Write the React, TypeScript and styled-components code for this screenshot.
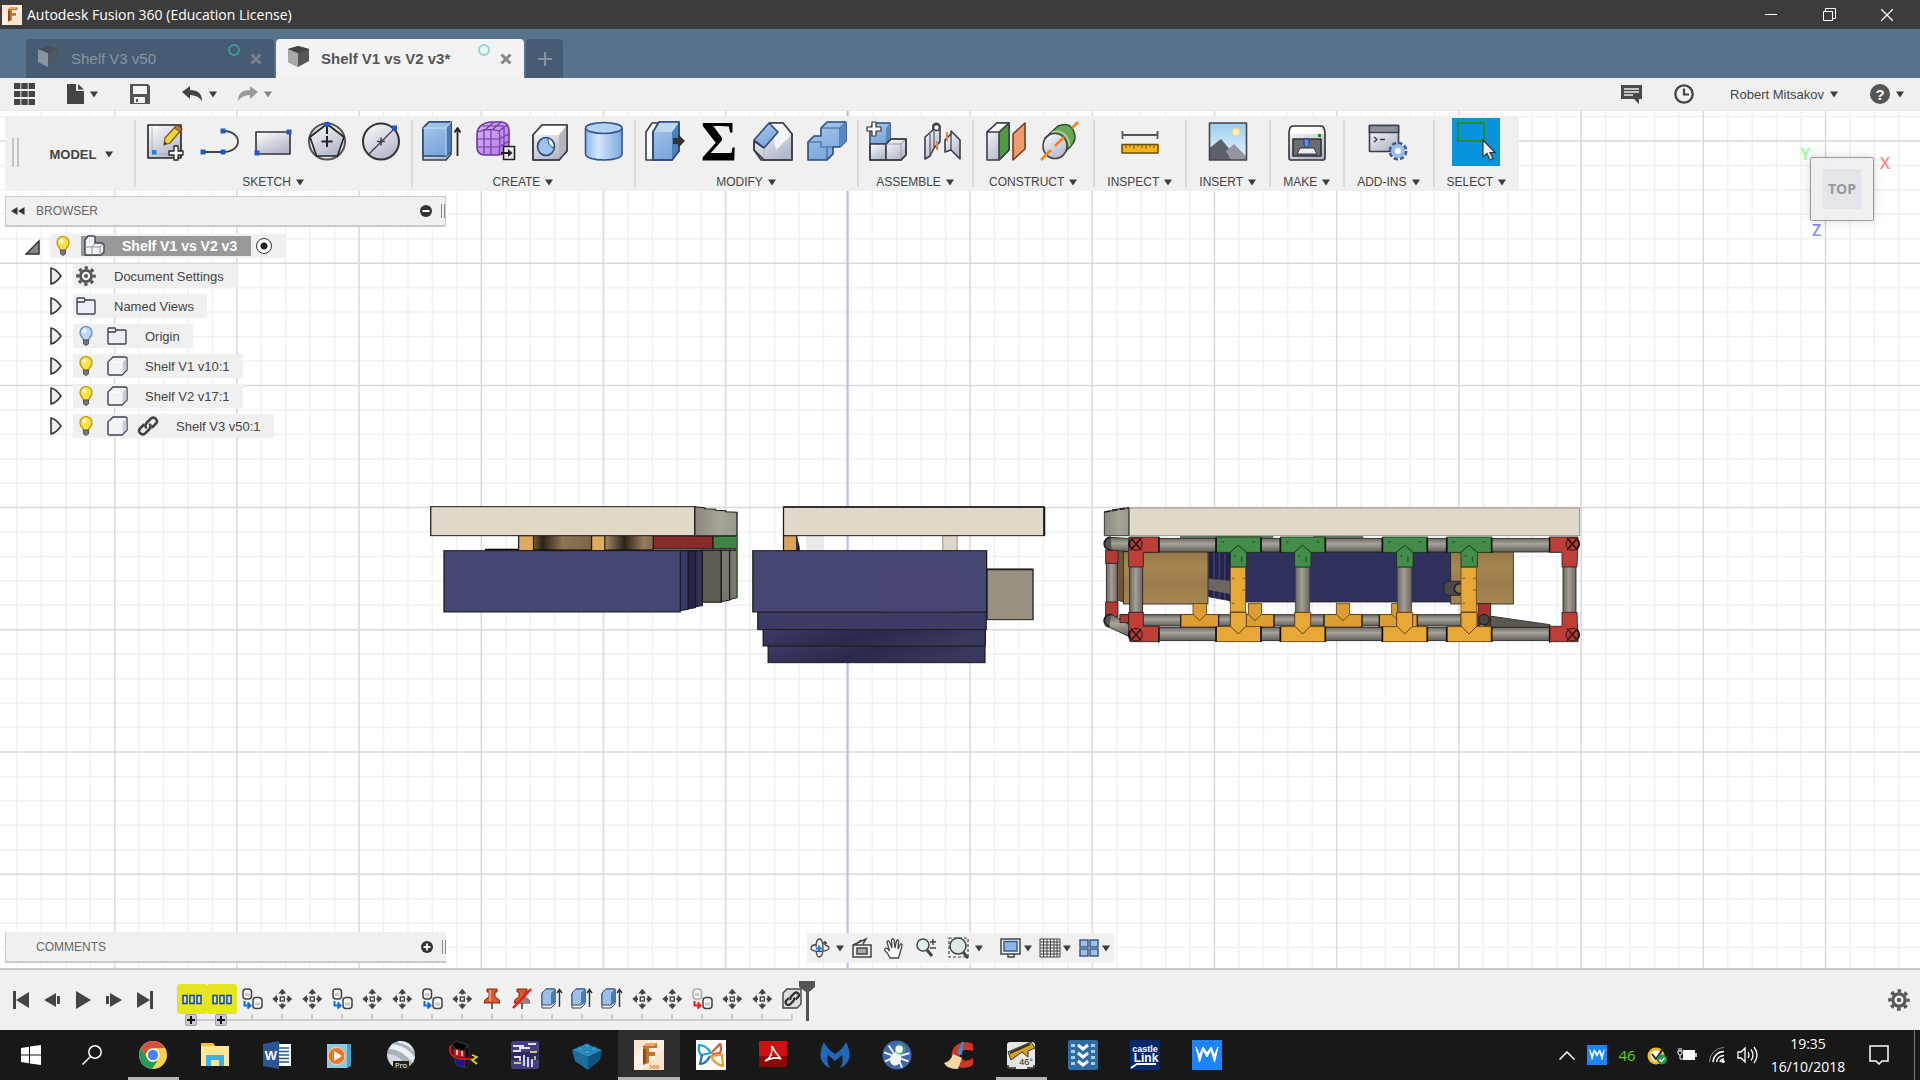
import React from "react";
import styled, { createGlobalStyle } from "styled-components";

const ui = `"Liberation Sans", Arial, sans-serif`;
const sys = `"Open Sans", "Segoe UI", sans-serif`;

const Global = createGlobalStyle`
  *, *::before, *::after { box-sizing: border-box; }
  body { margin: 0; background: #fff; font-family: ${ui}; color: #444; }
  button { border: 0; padding: 0; margin: 0; background: none; color: inherit; font: inherit; cursor: pointer; }
  ul, ol { list-style: none; margin: 0; padding: 0; }
  svg { display: block; }
`;

const Shell = styled.div`
  display: flex;
  flex-direction: column;
  min-height: 100vh;
`;

/* ---------- window title ---------- */
const TitleBar = styled.header`
  display: flex;
  align-items: center;
  height: 29px;
  background: #3c3c3c;
  color: #fff;
  font: 14px/28px ${sys};
  padding: 0 4px 0 2px;
`;
const TitleText = styled.h1`
  flex: 1;
  margin: 0 0 0 5px;
  font: inherit;
`;
const WindowButton = styled.button`
  display: grid;
  place-items: center;
  width: 58px;
  height: 28px;
`;

/* ---------- document tabs ---------- */
const TabBar = styled.nav`
  display: flex;
  align-items: flex-end;
  gap: 2px;
  height: 49px;
  padding-left: 26px;
  background: #56728d;
`;
const Tab = styled.div<{ $active?: boolean }>`
  display: flex;
  align-items: center;
  width: 248px;
  height: 39px;
  padding: 0 8px 0 12px;
  border-radius: 4px 4px 0 0;
  background: ${(p) => (p.$active ? "#f3f3f6" : "#455c72")};
  color: ${(p) => (p.$active ? "#555" : "#8b949d")};
  font-size: 15px;
  font-weight: ${(p) => (p.$active ? 700 : 400)};
`;
const TabName = styled.button`
  flex: 1;
  display: flex;
  align-items: center;
  gap: 12px;
  height: 39px;
  text-align: left;
  white-space: nowrap;
  svg { margin-bottom: 4px; }
`;
const SyncDot = styled.span<{ $dim?: boolean }>`
  align-self: flex-start;
  width: 12px;
  height: 12px;
  margin: 5px 6px 0 0;
  border: 2px solid ${(p) => (p.$dim ? "#3c9a94" : "#8fd9c5")};
  border-radius: 50%;
`;
const TabClose = styled.button`
  display: grid;
  place-items: center;
  width: 20px;
  height: 24px;
`;
const AddTab = styled.button`
  display: grid;
  place-items: center;
  width: 37px;
  height: 39px;
  border-radius: 4px 4px 0 0;
  background: #455c72;
`;

/* ---------- quick access bar ---------- */
const QuickBar = styled.div`
  display: flex;
  align-items: center;
  justify-content: space-between;
  height: 33px;
  padding: 0 16px 0 14px;
  background: #f0f0f0;
  border-bottom: 1px solid #e8e8e8;
  font-size: 13px;
`;
const QuickGroup = styled.div<{ $gap: number }>`
  display: flex;
  align-items: center;
  gap: ${(p) => p.$gap}px;
`;
const QuickButton = styled.button<{ $user?: boolean }>`
  display: flex;
  align-items: center;
  gap: 6px;
  height: 28px;
  padding-left: ${(p) => (p.$user ? 4 : 0)}px;
`;

/* ---------- canvas ---------- */
const Canvas = styled.main`
  position: relative;
  flex: 1;
  display: flex;
  flex-direction: column;
  align-items: flex-start;
  padding: 5px;
  overflow: hidden;
`;
const Scene = styled.svg`
  position: absolute;
  inset: 0;
  width: 100%;
  height: 100%;
`;
const Ribbon = styled.div`
  position: relative;
  display: flex;
  height: 75px;
  margin-bottom: 5px;
  background: #f0f0f0;
`;
const Grip = styled.div`
  width: 7px;
  height: 29px;
  margin: 22px 6px 0 7px;
  border: solid #c4c4c4;
  border-width: 0 2px;
`;
const Workspace = styled.button`
  width: 109px;
  padding: 2px 0 0 4px;
  display: flex;
  align-items: center;
  justify-content: center;
  gap: 9px;
  font-size: 13px;
  font-weight: 700;
`;
const Group = styled.section<{ $roomy?: boolean }>`
  display: flex;
  flex-direction: column;
  align-items: center;
  padding: 2px ${(p) => (p.$roomy ? 6 : 3)}px 0 ${(p) => (p.$roomy ? 7 : 4)}px;
  background: linear-gradient(#dadada, #dadada) 0 4px / 2px 67px no-repeat;
`;
const Tools = styled.div`
  display: flex;
`;
const Tool = styled.button<{ $on?: boolean }>`
  display: grid;
  place-items: center;
  width: ${(p) => (p.$on ? 48 : 54)}px;
  height: 48px;
  background: ${(p) => (p.$on ? "#0794dc" : "none")};
  svg { overflow: visible; }
`;
const GroupLabel = styled.button`
  display: flex;
  align-items: center;
  gap: 5px;
  padding: 0 10px;
  margin-top: 8px;
  height: 16px;
  font-size: 12px;
`;

const Panel = styled.div<{ $closed?: boolean }>`
  position: relative;
  display: flex;
  align-items: center;
  width: 441px;
  height: 31px;
  padding-left: 4px;
  background: #f0f0f0;
  border: solid #c9c9c9;
  border-width: ${(p) => (p.$closed ? "0 0 2px 1px" : "1px 1px 2px")};
  font-size: 12px;
  color: #666;
`;
const PanelTitle = styled.h2<{ $indent?: boolean }>`
  flex: 1;
  margin: 0 0 0 ${(p) => (p.$indent ? 26 : 11)}px;
  font: inherit;
`;
const PanelButton = styled.button`
  display: grid;
  place-items: center;
  width: 15px;
  height: 20px;
`;
const PanelGrip = styled.div`
  width: 4px;
  height: 14px;
  margin-left: 8px;
  border: solid #888;
  border-width: 0 1px;
`;

const Tree = styled.ul`
  position: relative;
  display: flex;
  flex-direction: column;
  gap: 6px;
  margin-top: 7px;
  font-size: 13px;
`;
const Row = styled.li<{ $root?: boolean }>`
  display: flex;
  align-items: center;
  height: 24px;
  padding-left: ${(p) => (p.$root ? 20 : 44)}px;
`;
const Twisty = styled.button<{ $root?: boolean }>`
  width: ${(p) => (p.$root ? 25 : 24)}px;
  height: 20px;
`;
const Chip = styled.div`
  display: flex;
  align-items: center;
  height: 24px;
  padding-right: 13px;
  background: #f0f0f0;
`;
const Cell = styled.span`
  display: grid;
  place-items: center;
  width: 31px;
  height: 22px;
  padding-right: 5px;
`;
const RowName = styled.button`
  padding: 0 0 0 10px;
  white-space: nowrap;
`;
const Selected = styled.div`
  display: flex;
  align-items: center;
  height: 20px;
  padding-right: 14px;
  margin-right: 5px;
  background: #999;
  color: #fff;
  font-size: 14px;
  font-weight: 700;
`;
const ActiveRadio = styled.input`
  appearance: none;
  width: 16px;
  height: 16px;
  margin: 0;
  border: 1px solid #333;
  border-radius: 50%;
  background: radial-gradient(#222 0 3px, #fff 4px);
`;

const Bottom = styled.div`
  position: relative;
  display: grid;
  grid-template-columns: 1fr auto 1fr;
  align-items: end;
  width: 100%;
  margin-top: auto;
`;
const NavBar = styled.div`
  display: flex;
  align-items: center;
  height: 30px;
  background: #f0f0f0;
`;
const NavButton = styled.button<{ $menu?: boolean; $far?: boolean; $wide?: boolean }>`
  display: flex;
  align-items: center;
  justify-content: ${(p) => (p.$wide ? "flex-start" : "center")};
  gap: ${(p) => (p.$far || p.$wide ? 5 : 2)}px;
  width: ${(p) => (p.$wide ? 55 : p.$menu ? 39 : 32)}px;
  height: 30px;
  padding-left: ${(p) => (p.$wide ? 6 : 0)}px;
`;

const ViewCube = styled.div`
  position: absolute;
  top: 34px;
  right: 30px;
  display: grid;
  grid-template-columns: 12px 64px 16px;
  grid-template-rows: 12px 64px 18px;
  font: 600 16px/18px ${sys};
`;
const CubeFace = styled.button`
  grid-area: 2 / 2;
  display: grid;
  place-items: center;
  border: 1px solid #999;
  border-radius: 2px;
  background: rgba(238, 238, 238, 0.9);
  box-shadow: 0 0 12px rgba(0, 0, 0, 0.15);
  span {
    width: 38px;
    padding: 10px 0;
    background: #e4e5ea;
    color: #96999d;
    font: 700 14px/20px ${sys};
  }
`;
const AxisName = styled.span<{ $axis: "X" | "Y" | "Z" }>`
  grid-area: ${(p) => ({ X: "1 / 3 / 3", Y: "1 / 1", Z: "3 / 2" })[p.$axis]};
  color: ${(p) => ({ X: "#ff8484", Y: "#8dff8d", Z: "#8a8aff" })[p.$axis]};
  justify-self: ${(p) => (p.$axis === "Z" ? "start" : "end")};
  padding: ${(p) => ({ X: "9px 0 0", Y: "0", Z: "0 2px" })[p.$axis]};
`;

/* ---------- timeline ---------- */
const Timeline = styled.footer`
  display: flex;
  align-items: flex-start;
  height: 62px;
  padding: 11px 10px 0 5px;
  background: #f0f0f0;
  border-top: 2px solid #c8c8c8;
`;
const Player = styled.div`
  display: flex;
  margin-right: 17px;
  padding-top: 2px;
`;
const PlayButton = styled.button`
  display: grid;
  place-items: center;
  width: 31px;
  height: 34px;
`;
const Steps = styled.ol`
  display: flex;
  height: 45px;
  padding-top: 3px;
  background: linear-gradient(#ccc, #ccc) 15px 38px / calc(100% - 30px) 2px no-repeat;
`;
const Step = styled.li`
  display: flex;
  flex-direction: column;
  align-items: center;
  width: 30px;
`;
const StepButton = styled.button<{ $hl?: boolean }>`
  width: 30px;
  height: 30px;
  border-radius: 3px;
  background: ${(p) => (p.$hl ? "#e4e71f" : "none")};
`;
const Tick = styled.span`
  width: 2px;
  height: 6px;
  background: #ccc;
`;
const Expand = styled.button`
  display: grid;
  place-items: center;
  width: 12px;
  height: 12px;
  margin-right: 3px;
  border: 1px solid #9aa0a8;
  border-radius: 2px;
  background: #c7ccd4;
`;
const Marker = styled.svg`
  margin-left: -8px;
`;
const Settings = styled.button`
  margin: 8px 0 0 auto;
`;

/* ---------- taskbar ---------- */
const Taskbar = styled.div`
  display: flex;
  align-items: stretch;
  height: 50px;
  background: #181818;
  color: #fff;
`;
const Task = styled.button<{ $system?: boolean; $run?: boolean; $focus?: boolean }>`
  display: grid;
  place-items: center;
  width: ${(p) => (p.$system ? 61 : 62)}px;
  background: ${(p) =>
    p.$focus
      ? "linear-gradient(#b5b3b3, #b5b3b3) bottom / 100% 3px no-repeat #2e2e2e"
      : p.$run
        ? "linear-gradient(#b5b3b3, #b5b3b3) bottom / 51px 3px no-repeat"
        : "none"};
`;
const Tray = styled.div`
  display: flex;
  align-items: center;
  margin-left: auto;
`;
const TrayButton = styled.button<{ $wide?: boolean }>`
  display: grid;
  place-items: center;
  width: ${(p) => (p.$wide ? 50 : 30)}px;
  height: 50px;
`;
const Temp = styled.span`
  color: #5fd000;
  font: 15px/20px ${sys};
`;
const Clock = styled.time`
  width: 92px;
  text-align: center;
  font: 14px/23px ${sys};
`;
const Peek = styled.button`
  align-self: stretch;
  width: 6px;
  margin-left: 10px;
  border-left: 1px solid #777;
`;

/* ---------- small drawings ---------- */
const Caret = ({ c = "#3c3c3c" }: { c?: string }) => (
  <svg width="8" height="7" viewBox="0 0 8 7"><path d="M0 0.500H8L4 6.500Z" fill={c} /></svg>
);

const HiddenSvg = styled.svg`
  position: absolute;
`;
const Defs = () => (
  <HiddenSvg width="0" height="0" aria-hidden="true">
    <defs>
      <linearGradient id="steel" x1="0" y1="0" x2="0.6" y2="1"><stop offset="0" stopColor="#fff" /><stop offset="1" stopColor="#b4b9ca" /></linearGradient>
      <linearGradient id="blue" x1="0" y1="0" x2="0.4" y2="1"><stop offset="0" stopColor="#a9caee" /><stop offset="1" stopColor="#7aa7da" /></linearGradient>
      <linearGradient id="tube" x1="0" x2="1"><stop offset="0" stopColor="#8db6e6" /><stop offset="0.35" stopColor="#d3e7fb" /><stop offset="1" stopColor="#7ea9dc" /></linearGradient>
      <linearGradient id="violet" x1="0" y1="0" x2="1" y2="1"><stop offset="0" stopColor="#d8b4f6" /><stop offset="1" stopColor="#b07ae4" /></linearGradient>
      <linearGradient id="sky" x1="0" y1="0" x2="0" y2="1"><stop offset="0" stopColor="#9ccdf0" /><stop offset="1" stopColor="#e8f6fc" /></linearGradient>
      <linearGradient id="pipeH" x1="0" y1="0" x2="0" y2="1"><stop offset="0" stopColor="#6b6862" /><stop offset="0.4" stopColor="#a8a399" /><stop offset="1" stopColor="#615e58" /></linearGradient>
      <linearGradient id="pipeV" x1="0" x2="1"><stop offset="0" stopColor="#6b6862" /><stop offset="0.45" stopColor="#a59f94" /><stop offset="1" stopColor="#6a665f" /></linearGradient>
      <linearGradient id="brown" x1="0" x2="1"><stop offset="0" stopColor="#6d5b42" /><stop offset="0.15" stopColor="#2c241a" /><stop offset="0.5" stopColor="#8a7453" /><stop offset="1" stopColor="#7a6648" /></linearGradient>
      <linearGradient id="brown2" x1="0" x2="1"><stop offset="0" stopColor="#a38c67" /><stop offset="0.4" stopColor="#2c241a" /><stop offset="0.8" stopColor="#967f5d" /><stop offset="1" stopColor="#7a6648" /></linearGradient>
      <linearGradient id="deep" x1="0" y1="0" x2="1" y2="0.2"><stop offset="0" stopColor="#3b3b66" /><stop offset="0.5" stopColor="#29294a" /><stop offset="1" stopColor="#39395f" /></linearGradient>
      <linearGradient id="slabside" x1="0" x2="1"><stop offset="0" stopColor="#8b877c" /><stop offset="0.6" stopColor="#a8a497" /><stop offset="1" stopColor="#9b978b" /></linearGradient>
      <linearGradient id="oak" x1="0" y1="0" x2="0" y2="1"><stop offset="0" stopColor="#957848" /><stop offset="0.3" stopColor="#a68753" /><stop offset="0.6" stopColor="#9a7c4b" /><stop offset="1" stopColor="#a58652" /></linearGradient>
    </defs>
  </HiddenSvg>
);

const Svg44 = ({ children }: { children: React.ReactNode }) => (
  <svg width="44" height="44" viewBox="0 0 44 44" fill="none" stroke="#3a3f4a" strokeWidth="1.6" strokeLinejoin="round">{children}</svg>
);
const Knob = ({ x, y }: { x: number; y: number }) => <rect x={x - 2.5} y={y - 2.5} width="5" height="5" fill="#2457c8" stroke="none" />;

const icons: Record<string, React.ReactNode> = {
  sketch: (
    <Svg44>
      <rect x="5" y="5" width="33" height="33" fill="url(#steel)" stroke="#222" />
      <path d="M9 7V34H28" strokeWidth="0.8" stroke="#9aa" />
      <rect x="9" y="30" width="4.500" height="4.500" fill="#2a7de0" stroke="none" />
      <path d="M34 5L39 9L27 23L21 25L22 18Z" fill="#f6cf3c" stroke="#7a5b14" strokeWidth="1.200" />
      <path d="M34 5L39 9L37 12L31.500 8Z" fill="#b8794a" stroke="#6d4523" strokeWidth="1" />
      <path d="M21 25L21.500 21.500L24 23.500Z" fill="#333" stroke="none" />
      <path d="M31 26H35V31H40V35H35V40H31V35H26V31H31Z" fill="#fff" stroke="#222" strokeWidth="1.300" />
    </Svg44>
  ),
  line: (<Svg44><path d="M6 32H26C46 32 46 11 26 11" stroke="#444" strokeWidth="1.800" /><Knob x={6} y={32} /><Knob x={26} y={32} /><Knob x={26} y={11} /></Svg44>),
  rect: (<Svg44><rect x="5" y="12" width="34" height="22" fill="url(#steel)" stroke="#333" /><Knob x={6} y={33} /><Knob x={38} y={12} /></Svg44>),
  polygon: (
    <Svg44><circle cx="22" cy="21.500" r="18" stroke="#555" strokeWidth="2" fill="#dfe0e3" /><path d="M22 4L39 17L32.500 36H11.500L5 17Z" fill="url(#steel)" stroke="#222" /><path d="M22 6V14M22 16V27M16.500 21.500H27.500" strokeWidth="2" stroke="#222" /><Knob x={22} y={4.5} /></Svg44>
  ),
  circle: (
    <Svg44><circle cx="22" cy="21.500" r="18" fill="url(#steel)" stroke="#333" strokeWidth="2" /><path d="M10 34L35 9" strokeWidth="1.300" /><path d="M22 17.500V25.500M18 21.500H26" strokeWidth="1.500" /><Knob x={35.5} y={8} /></Svg44>
  ),
  extrude: (
    <Svg44><path d="M3 8L9 2H31V34L26 40H3Z" fill="url(#steel)" /><path d="M3 8L9 2H31V31L26 36H3Z" fill="url(#blue)" stroke="#2d4a78" /><path d="M26 8L31 2V31L26 36Z" fill="#4c7ab4" stroke="none" /><path d="M3 8H26V36M26 8L31 2" stroke="#c9dff6" strokeWidth="1" /><path d="M37.500 36V9M34.500 12.500L37.500 8L40.500 12.500" strokeWidth="1.800" stroke="#222" /></Svg44>
  ),
  form: (
    <Svg44><path d="M3 15Q3 4 16 2H28Q35 3 35 11V24Q34 34 24 35H11Q3 35 3 27Z" fill="url(#violet)" stroke="#6a35a0" /><path d="M3 19H25M3 27H25M10 9V35M17 9V35M4 12Q14 8 25 11Q27 20 25 35M25 11L33 5M25 19L35 14M25 27L35 21M11 10L20 2M18 10L27 2M30 7V32M8 6H30" stroke="#6f3ba6" strokeWidth="1.200" /><rect x="29.500" y="26.500" width="11" height="13" fill="#e8e8e8" stroke="#222" /><path d="M27 33H36" stroke="#222" strokeWidth="2" /><path d="M34 29L38.500 33L34 37Z" fill="#222" stroke="none" /></Svg44>
  ),
  hole: (
    <Svg44><path d="M5 15L14 5H39V31L31 40H5Z" fill="url(#steel)" /><path d="M5 15L14 5H39L31 15Z" fill="#fff" stroke="none" /><path d="M31 15L39 5V31L31 40Z" fill="#b3b5ba" stroke="none" /><path d="M5 15L14 5H39V31L31 40H5Z" /><ellipse cx="18" cy="26.500" rx="8.500" ry="9" fill="#9fc3ec" stroke="#2d4a78" /><path d="M20 18A9 9 0 0 0 26 28A9 9 0 0 0 20 18Z" fill="#fff" stroke="#2d4a78" strokeWidth="1" /></Svg44>
  ),
  cylinder: (
    <Svg44><path d="M3.500 8V34C3.500 42 40 42 40 34V8" fill="url(#tube)" stroke="#35558a" /><ellipse cx="21.800" cy="8" rx="18.200" ry="5.500" fill="#b4d2f3" stroke="#35558a" /></Svg44>
  ),
  press: (
    <Svg44><path d="M3 12L9 3H16L10 12V40H3Z" fill="#fafafa" /><path d="M10 12L16 2H36V31L29 40H10Z" fill="url(#blue)" stroke="#2d4a78" /><path d="M29 12L36 2V31L29 40Z" fill="#5180ba" stroke="none" /><path d="M10 12L16 2H36L29 12Z" fill="#bdd8f5" stroke="none" /><path d="M10 12L16 2H36V31L29 40H10Z" stroke="#2d4a78" /><path d="M30 18H35V14L42 21L35 28V24H30Z" fill="#333" stroke="none" /></Svg44>
  ),
  sigma: (<Svg44><text x="22" y="40.500" textAnchor="middle" fontFamily="Liberation Serif, serif" fontWeight="700" fontSize="56" fill="#000" stroke="none">Σ</text></Svg44>),
  chamfer: (
    <Svg44><path d="M3 22L20 3H32L41 14V40H10L3 30Z" fill="url(#steel)" /><path d="M20 3L32 3L41 14L25 30Z" fill="#f5f5f7" stroke="none" /><path d="M3 20L18 3L27 12L13 28Z" fill="url(#blue)" stroke="#2d4a78" /><path d="M13 28V40" strokeWidth="0.800" stroke="#bbb" /><path d="M13 28L3 21V30L13 40H41V14L32 3H18" /></Svg44>
  ),
  combine: (
    <Svg44><path d="M3 22L9 16H16V8L22 2H41V21L35 27H28V34L22 40H3Z" fill="url(#blue)" stroke="#2d4a78" /><path d="M16 8H35V27M35 8L41 2M3 22H16V27H28M22 27V40" stroke="#3d6299" strokeWidth="1.200" /><path d="M35 8L41 2V21L35 27Z" fill="#5a88c2" stroke="none" /></Svg44>
  ),
  component: (
    <Svg44><path d="M4 8L8 3H24V20L20 24H4Z" fill="url(#blue)" stroke="#2d4a78" /><path d="M20 8L24 3V20L20 24Z" fill="#5a88c2" stroke="none" /><path d="M4 24H20V40H4Z" fill="url(#steel)" /><path d="M20 24L25 19H40V35L35 40H20Z" fill="url(#steel)" /><path d="M20 24H35V40M35 24L40 19" stroke="#999" strokeWidth="1" /><path d="M20 24L25 19H40V35L35 40H4V24" /><path d="M6 2H10V7H15V11H10V16H6V11H1V7H6Z" fill="#fff" stroke="#333" strokeWidth="1.200" /></Svg44>
  ),
  joint: (
    <Svg44><path d="M5 17L13 10V5Q17 1 20 6V22L14 28L10 36L5 39Z" fill="url(#steel)" /><path d="M10 14V35M14 11V27" strokeWidth="1" /><circle cx="16.500" cy="7.500" r="3" fill="#fff" /><path d="M25 20L31 14V11L40 20V39L31 30L25 32Z" fill="url(#steel)" /><path d="M31 14V30" strokeWidth="1.200" /><path d="M17 21V30M27 12V21" stroke="#f08030" strokeWidth="2" /></Svg44>
  ),
  plane: (
    <Svg44><path d="M3 12L13 3H25V30L15 40H3Z" fill="url(#steel)" /><path d="M15 12L25 3V30L15 40Z" fill="#4f9a3f" /><path d="M3 12L13 3H25L15 12Z" fill="#fafafa" /><path d="M29 14L41 3V29L29 40Z" fill="#ee9c6c" stroke="#7a3c1c" /></Svg44>
  ),
  axis: (
    <Svg44><path d="M7 18L20 6Q32 1 36 12Q39 20 33 26L22 37Z" fill="#69a858" stroke="#2e5a24" /><path d="M14 12Q28 8 32 26" stroke="#a9d59b" /><ellipse cx="17" cy="26" rx="12" ry="12.500" fill="url(#steel)" stroke="#444" /><path d="M3 40L13 30M17 26L26 17M34 8L40 2" stroke="#f58220" strokeWidth="2.500" /></Svg44>
  ),
  inspect: (
    <Svg44><path d="M4 15H40M4.500 11V19M39.500 11V19" strokeWidth="1.800" stroke="#555" /><rect x="4" y="24.500" width="36" height="8.500" fill="#f2b61c" stroke="#6d4d08" /><path d="M8 25V28M12 25V27M16 25V29M20 25V27M24 25V28M28 25V29M32 25V27M36 25V28" stroke="#6d4d08" strokeWidth="1" /></Svg44>
  ),
  insert: (
    <Svg44><rect x="3.500" y="3" width="37" height="37" fill="url(#sky)" stroke="none" /><circle cx="30" cy="12" r="3.500" fill="#fff6c8" stroke="#f3dd88" /><path d="M3.500 28L15 19L26 32L32 40H3.500Z" fill="#5d606b" stroke="none" /><path d="M20 31L28 24L40 36V40H25Z" fill="#9296a1" stroke="none" /><rect x="3.500" y="3" width="37" height="37" stroke="#444" /></Svg44>
  ),
  make: (
    <Svg44><path d="M4 14Q4 6 8 6H36Q40 6 40 14V38Q40 40 38 40H6Q4 40 4 38Z" fill="url(#steel)" stroke="#333" /><path d="M5 14L9 7H35L39 14Z" fill="#fff" stroke="none" /><rect x="8" y="19" width="28" height="17" fill="#6b6d73" stroke="#333" /><path d="M15 28H29L32 34H12Z" fill="#eef0f5" stroke="#333" strokeWidth="1" /><path d="M19 19H24V25L21.500 28L19 25Z" fill="#5b93df" stroke="#1d3f7a" strokeWidth="1" /><rect x="33" y="14" width="3" height="3" fill="#1a8a1a" stroke="none" /></Svg44>
  ),
  addins: (
    <Svg44><rect x="3.500" y="5.500" width="29" height="26" fill="url(#steel)" /><rect x="3.500" y="5.500" width="29" height="7" fill="#8d929d" /><path d="M8 17L11 19.500L8 22M14 19.500H19" /><circle cx="32" cy="31" r="7.500" stroke="#3d5f94" strokeWidth="4" strokeDasharray="3.900 2" /><circle cx="32" cy="31" r="5" fill="#fff" stroke="#9bbce8" strokeWidth="4" /></Svg44>
  ),
  select: (
    <svg width="48" height="48" viewBox="0 0 48 48"><rect x="6" y="5" width="26" height="18" fill="none" stroke="#2e8a2e" strokeWidth="2" /><path d="M31 22V39L35 35.500L38 42L41 40.500L38 34.500H43Z" fill="#f2f2f2" stroke="#333" strokeWidth="1.200" /></svg>
  ),
};

const groups: { name: string; roomy?: boolean; tools: string[] }[] = [
  { name: "SKETCH", tools: ["sketch", "line", "rect", "polygon", "circle"] },
  { name: "CREATE", tools: ["extrude", "form", "hole", "cylinder"] },
  { name: "MODIFY", tools: ["press", "sigma", "chamfer", "combine"] },
  { name: "ASSEMBLE", tools: ["component", "joint"] },
  { name: "CONSTRUCT", roomy: true, tools: ["plane", "axis"] },
  { name: "INSPECT", tools: ["inspect"] },
  { name: "INSERT", tools: ["insert"] },
  { name: "MAKE", tools: ["make"] },
  { name: "ADD-INS", tools: ["addins"] },
  { name: "SELECT", tools: ["select"] },
];

const FusionLogo = ({ s, label }: { s: number; label?: boolean }) => (
  <svg width={s} height={s} viewBox="0 0 30 30"><rect width="30" height="30" fill="#fbe3cf" /><path d="M0 18L14 0H30V8L8 30H0Z" fill="#fdf0e5" /><path d="M9 6L13 3H23V8H15V12H21V16H15V23L9 25Z" fill="#c8742a" /><path d="M9 6L13 3H23L20 6Z" fill="#f0a85c" /><path d="M9 9V25L12 22V9Z" fill="#8d4a15" />{label && <text x="15" y="28.500" fontSize="6" fontFamily="Open Sans, sans-serif" fontWeight="700" fill="#e58a3c">360</text>}</svg>
);
const TabCube = ({ dim }: { dim?: boolean }) => (
  <svg width="21" height="22" viewBox="0 0 21 22" opacity={dim ? 0.45 : 1}><path d="M0 3L10 0L21 3V15L10 21L0 16Z" fill="#555" /><path d="M0 3L10 7V21L0 16Z" fill={dim ? "#d5dbe0" : "#a9a9a9"} /><path d="M0 3L10 0L21 3L10 7Z" fill="#444" /></svg>
);
const Cross = ({ c }: { c: string }) => <svg width="12" height="12" viewBox="0 0 12 12"><path d="M1.500 1.500L10.500 10.500M10.500 1.500L1.500 10.500" stroke={c} strokeWidth="3" /></svg>;

const Gear = ({ s = 20 }: { s?: number }) => (
  <svg width={s} height={s} viewBox="0 0 20 20" fill="none" stroke="#555"><circle cx="10" cy="10" r="8.300" strokeWidth="3" strokeDasharray="3.260 3.260" strokeDashoffset="1.600" /><circle cx="10" cy="10" r="5.600" strokeWidth="2.800" /><circle cx="10" cy="10" r="2" fill="#555" stroke="none" /></svg>
);
const Bulb = ({ off }: { off?: boolean }) => (
  <svg width="14" height="20" viewBox="0 0 14 20"><path d="M4 12.500Q1 10 1 6.500A6 6 0 0 1 13 6.500Q13 10 10 12.500V14H4Z" fill={off ? "#bcd6fa" : "#fbe23c"} stroke={off ? "#6d87b0" : "#b89612"} strokeWidth="1.200" /><ellipse cx="5.500" cy="5" rx="2" ry="2.500" fill="#fff" opacity="0.800" /><path d="M4.500 14H9.500V18L7 19.500L4.500 18Z" fill="#777" stroke="#444" strokeWidth="0.800" /></svg>
);
const Folder = () => <svg width="20" height="18" viewBox="0 0 20 18"><path d="M1 4V16Q1 17 2 17H18Q19 17 19 16V4Q19 3 18 3H9L8 1H2Q1 1 1 2V5H8L9.500 3" fill="#eceff5" stroke="#3c4250" strokeWidth="1.400" /></svg>;
const Body = () => <svg width="22" height="22" viewBox="0 0 22 22"><path d="M2 7L7 2H19Q21 2 21 4V15L16 20H4Q2 20 2 18Z" fill="#f1f2f6" stroke="#3c4250" strokeWidth="1.400" strokeLinejoin="round" /><path d="M16 7V19L20.500 14.500V4L19.500 3Z" fill="#c9ccd5" /><path d="M3 7H16L20 3M16 7V19" stroke="#fff" fill="none" /></svg>;
const Assembly = () => <svg width="22" height="22" viewBox="0 0 22 22"><path d="M2 5L5 1H11L12 2V8H19L21 10V17L18 20H2Z" fill="#f1f2f6" stroke="#3c4250" strokeWidth="1.400" strokeLinejoin="round" /><path d="M2 12H9M9 20V12L12 8M10 12H17V20M17 12L20 9" stroke="#8b909c" fill="none" /></svg>;
const Link = () => <svg width="22" height="22" viewBox="0 0 22 22" fill="none" stroke="#444" strokeWidth="2.600" strokeLinecap="round"><path d="M9 12.500Q7.500 10 10 7.500L14 3.500Q16.500 1.500 19 4Q21 6.500 19 8.500L15.500 12" /><path d="M13 9.500Q14.500 12 12 14.500L8 18.500Q5.500 20.500 3 18Q1 15.500 3 13.500L6.500 10" /></svg>;
const Twist = () => <svg width="14" height="20" viewBox="0 0 14 20"><path d="M2 2Q7 3 12 10Q7 17 2 18Z" fill="#eee" stroke="#333" strokeWidth="1.600" strokeLinejoin="round" /></svg>;

const rows: { name: string; icons: React.ReactNode[] }[] = [
  { name: "Document Settings", icons: [<Gear />] },
  { name: "Named Views", icons: [<Folder />] },
  { name: "Origin", icons: [<Bulb off />, <Folder />] },
  { name: "Shelf V1 v10:1", icons: [<Bulb />, <Body />] },
  { name: "Shelf V2 v17:1", icons: [<Bulb />, <Body />] },
  { name: "Shelf V3 v50:1", icons: [<Bulb />, <Body />, <Link />] },
];

/* ---------- 3D scene ---------- */
const GRID = 122.2;
const Lines = () => {
  const out: React.ReactNode[] = [];
  for (let i = -6; i <= 80; i++) {
    const x = 114.7 + (i * GRID) / 5;
    if (i % 5) out.push(<path key={"v" + i} d={`M${x} 0V1080`} stroke="#f1f1f1" strokeWidth="1.500" />);
  }
  for (let i = -2; i <= 36; i++) {
    const y = 141 + (i * GRID) / 5;
    if (i % 5) out.push(<path key={"h" + i} d={`M0 ${y}H1920`} stroke="#f1f1f1" strokeWidth="1.500" />);
  }
  for (let i = 0; i < 15; i++) out.push(<path key={"V" + i} d={`M${114.7 + i * GRID} 0V1080`} stroke="#d9d9d9" strokeWidth="1.500" />);
  for (let i = 0; i < 7; i++) out.push(<path key={"H" + i} d={`M0 ${141 + i * GRID}H1920`} stroke="#d9d9d9" strokeWidth="1.500" />);
  return <>{out}</>;
};

const LeftModels = () => (
  <g transform="translate(410 490) scale(0.41454 0.33333)" stroke="#1b1b1b" strokeWidth="3">
    <rect x="299" y="137" width="138" height="46" fill="url(#brown)" stroke="none" />
    <rect x="470" y="137" width="118" height="46" fill="url(#brown2)" stroke="none" />
    <path d="M181 179H262M299 181H789" strokeWidth="5" stroke="#000" />
    <rect x="262" y="137" width="36" height="46" fill="#dcaa60" />
    <rect x="438" y="137" width="32" height="46" fill="#dcaa60" />
    <rect x="587" y="138" width="144" height="38" fill="#8a2b2b" />
    <rect x="731" y="138" width="58" height="38" fill="#3f8444" />
    <rect x="50" y="50" width="637" height="87" fill="#dfd9c8" />
    <path d="M687 50L712 54V56L737 58V61L762 62V65L789 67V137H687Z" fill="url(#slabside)" />
    <path d="M705 181H751V337H705Z" fill="#5d5b52" />
    <path d="M751 181H771V330L751 335Z" fill="#7b766c" />
    <path d="M771 181H789V323L771 329Z" fill="#7b766c" />
    <path d="M789 137V325" stroke="#3f8444" />
    <path d="M689 182H705V347L689 350Z" fill="#33335c" />
    <path d="M671 182H689V353L671 357Z" fill="#25254a" />
    <path d="M652 182H671V358L652 362Z" fill="#38386a" />
    <rect x="82" y="182" width="570" height="184" fill="#464673" />
    <rect x="955" y="138" width="43" height="42" fill="#eaeaea" stroke="none" />
    <rect x="1285" y="137" width="35" height="46" fill="#dfd6ca" stroke="#a9a294" />
    <path d="M934 142V183H940V172Z" fill="#111" stroke="none" />
    <rect x="901" y="137" width="32" height="46" fill="#dba45c" />
    <rect x="901" y="51" width="629" height="86" fill="#dfd9c8" />
    <path d="M1530 51V137M901 51H1530" strokeWidth="5" />
    <rect x="864" y="467" width="523" height="51" fill="url(#deep)" />
    <rect x="852" y="418" width="536" height="50" fill="url(#deep)" />
    <rect x="839" y="365" width="551" height="54" fill="#3b3b66" />
    <rect x="1392" y="238" width="111" height="151" fill="#989182" />
    <path d="M1392 238H1503" strokeWidth="5" />
    <rect x="827" y="182" width="564" height="184" fill="#464673" />
    <rect x="1142" y="236" width="176" height="129" fill="#484570" stroke="none" opacity="0.600" />
  </g>
);

const TopTee = ({ x, yellow, bottom }: { x: number; yellow?: boolean; bottom?: boolean }) => (
  <g stroke="#17351a">
    {yellow ? (
      <g stroke="#6d4708"><rect x={x - 24} y="231" width="46" height="180" fill="#e8a838" /><path d={`M${x - 24} 366H${x + 22}M${x + 12} 265h8M${x + 12} 300h8M${x - 20} 265h8M${x - 20} 340h8`} /></g>
    ) : (
      <rect x={x - 22} y="231" width="43" height="138" fill="url(#pipeV)" stroke="#444" />
    )}
    <rect x={x - 24} y="170" width="49" height="61" fill="#448c4a" />
    <rect x={x - 66} y="141" width="134" height="46" fill="#448c4a" />
    <path d={`M${x - 67} 143V188M${x + 68} 143V188`} strokeWidth="5" stroke="#111" />
    <path d={`M${x - 23} 189V187L${x} 166L${x + 23} 187V189Z`} fill="#448c4a" stroke="none" />
    <path d={`M${x - 25} 187L${x} 166L${x + 25} 187`} fill="none" strokeWidth="3" />
    <path d={`M${x - 50} 156h8M${x + 42} 156h8M${x + 10} 200v16M${x - 10} 195v6`} />
    {bottom && (
      <g stroke="#5d3d08">
        <rect x={x - 66} y="410" width="134" height="45" fill="#e8a838" />
        <path d={`M${x - 24} 367H${x + 24}V412L${x} 432L${x - 24} 412Z`} fill="#e8a838" stroke="none" />
        <path d={`M${x - 24} 367H${x + 22}M${x - 24} 367V408L${x} 432L${x + 24} 408V367`} fill="none" strokeWidth="3" />
        <path d={`M${x - 67} 410V456M${x + 68} 410V456`} strokeWidth="5" stroke="#111" />
      </g>
    )}
  </g>
);
const BackTee = ({ x, w = 114 }: { x: number; w?: number }) => (
  <g stroke="#5d3d08" strokeWidth="2.500" fill="#dc9e34">
    <rect x={x - 20} y="341" width="40" height="40" /><rect x={x - 57} y="374" width={w} height="37" />
    <path d={`M${x - 19} 372V374L${x} 392L${x + 19} 374V372Z`} stroke="none" />
    <path d={`M${x - 19} 374L${x} 392L${x + 19} 374`} fill="none" /><path d={`M${x - 57} 374V411M${x - 57 + w} 374V411`} strokeWidth="4" stroke="#222" />
  </g>
);
const Corner = ({ x, y, flip }: { x: number; y: number; flip?: boolean }) => (
  <g stroke="#111" strokeWidth="4"><circle cx={x} cy={y} r="19" fill="#b63a33" strokeWidth="2.500" /><path d={`M${x - 16} ${y - 18}L${x + 16} ${y + 18}M${x + 16} ${y - 18}L${x - 16} ${y + 18}`} /><path d={flip ? `M${x + 17} ${y - 12}Q${x + 24} ${y} ${x + 17} ${y + 12}` : `M${x - 17} ${y - 12}Q${x - 24} ${y} ${x - 17} ${y + 12}`} fill="none" strokeWidth="5" /><path d={flip ? `M${x - 68} ${y - 20}V${y + 24}` : `M${x + 68} ${y - 20}V${y + 24}`} /></g>
);

const Frame = () => (
  <g transform="translate(1080 490) scale(0.33333)" stroke="#222" strokeWidth="2.500">
    <path d="M112 185H150V342L112 330Z" fill="#6d5838" />
    <rect x="130" y="185" width="254" height="157" fill="url(#oak)" />
    <path d="M386 185H450V332L386 320Z" fill="#232347" />
    <path d="M402 185V324M418 185V328M434 185V330" stroke="#3d3d70" strokeWidth="5" />
    <rect x="450" y="185" width="662" height="151" fill="#30305c" />
    <rect x="1112" y="185" width="188" height="157" fill="url(#oak)" />
    <path d="M386 266L450 272V312L386 300Z" fill="#6a6761" stroke="none" />
    <path d="M1105 274H1140V316H1105Q1092 312 1092 295Q1092 278 1105 274Z" fill="#4c4a47" />
    <circle cx="1138" cy="296" r="15" fill="#8f713f" strokeWidth="5" />
    <path d="M300 141H580M700 141H850" stroke="#2c4f2f" strokeWidth="5" />
    <rect x="120" y="374" width="1080" height="34" fill="url(#pipeH)" />
    <path d="M1215 376L1410 404V412H1215Z" fill="#5c5953" />
    <rect x="1194" y="341" width="38" height="64" fill="#a9322d" />
    <circle cx="1212" cy="389" r="16" fill="#444" strokeWidth="4" />
    <BackTee x={359} /><BackTee x={525} /><BackTee x={789} /><BackTee x={955} />
    <rect x="79" y="180" width="33" height="200" fill="url(#pipeV)" />
    <rect x="77" y="180" width="37" height="40" fill="#b03a34" />
    <rect x="77" y="336" width="37" height="45" fill="#b03a34" />
    <path d="M92 142L160 146V186L92 180Z" fill="url(#pipeH)" />
    <path d="M92 142A19 19 0 0 0 92 180" fill="#555" strokeWidth="6" />
    <path d="M80 380L96 374L160 412L148 440L84 410Z" fill="url(#pipeH)" />
    <path d="M94 374A18 18 0 0 0 88 410" fill="#555" strokeWidth="6" />
    <rect x="120" y="374" width="26" height="24" fill="#b03a34" />
    <rect x="170" y="145" width="1270" height="41" fill="url(#pipeH)" />
    <rect x="170" y="412" width="1270" height="40" fill="url(#pipeH)" />
    <rect x="149" y="200" width="39" height="200" fill="url(#pipeV)" />
    <rect x="1449" y="200" width="39" height="200" fill="url(#pipeV)" />
    <path d="M147 141H238V187H190V231H146V160Z" fill="#bf3f38" />
    <path d="M146 367H190V409H238V455H150L146 440Z" fill="#bf3f38" />
    <path d="M1408 141H1494V160L1491 231H1446V187H1408Z" fill="#bf3f38" />
    <path d="M1408 455H1494V440L1491 367H1446V409H1408Z" fill="#bf3f38" />
    <Corner x={168} y={162} /><Corner x={168} y={434} /><Corner x={1477} y={162} flip /><Corner x={1477} y={434} flip />
    <TopTee x={475} yellow bottom /><TopTee x={668} bottom /><TopTee x={974} bottom /><TopTee x={1167} yellow bottom />
    <path d="M73 66L96 62V60L120 56L147 53V137H73Z" fill="url(#slabside)" />
    <path d="M73 66L147 53" strokeWidth="5" strokeDasharray="18 5" />
    <rect x="147" y="54" width="1352" height="83" fill="#dfd9c8" stroke="#8d897e" />
    <path d="M147 54V137" />
  </g>
);

/* ---------- timeline icons ---------- */
const Svg30 = ({ children }: { children: React.ReactNode }) => <svg width="30" height="30" viewBox="0 0 30 30" fill="none">{children}</svg>;
const CopyDrawing = ({ from, arrow }: { from: string; arrow: string }) => (
  <Svg30><g fill="#f4f4f4" stroke="#444" strokeWidth="1.500"><rect x="6" y="5" width="8.500" height="10" rx="3" stroke={from} /><rect x="16" y="13.500" width="9" height="11" rx="3" /></g><path d="M8 10.500H12.500" stroke="#ccc" strokeWidth="3" /><path d="M18 20H23" stroke="#ccc" strokeWidth="3" /><path d="M7.500 17V21.500H12M10.500 18.500L13.500 21.500L10.500 24.500" stroke={arrow} strokeWidth="2" /></Svg30>
);
const PinDrawing = ({ off }: { off?: boolean }) => (
  <Svg30><path d="M15 18V25" stroke="#444" strokeWidth="1.600" /><path d="M10 5H20V8H18V13Q23 15 23 19H7Q7 15 12 13V8H10Z" fill="#e0582a" stroke="#7d2c10" />{off ? <><path d="M13 19L19 13Q23 15 23 19Z" fill="#888" /><path d="M6 24L24 5" stroke="#f01818" strokeWidth="2.500" /></> : <path d="M13 6V17" stroke="#f6a98a" strokeWidth="1.500" />}</Svg30>
);
const stepIcons: Record<string, React.ReactNode> = {
  group: <Svg30><g fill="#cfe0f5" stroke="#1d4f86" strokeWidth="1.600"><rect x="6" y="11.500" width="4" height="8" /><rect x="13" y="11.500" width="4" height="8" /><rect x="20" y="11.500" width="4" height="8" /></g></Svg30>,
  move: <Svg30><rect x="13.300" y="13" width="4" height="4" stroke="#444" strokeWidth="1.400" /><path d="M15.300 10.500V8M15.300 19.500V22M11 15H8.500M19.500 15H22" stroke="#444" strokeWidth="2.600" /><path d="M11.300 9.500L15.300 4.800L19.300 9.500ZM11.300 20.500L15.300 25.200L19.300 20.500ZM10 11L5.300 15L10 19ZM20.600 11L25.300 15L20.600 19Z" fill="#444" /></Svg30>,
  copy: <CopyDrawing from="#444" arrow="#0b6fd0" />,
  copyRed: <CopyDrawing from="#aaa" arrow="#e81c1c" />,
  pin: <PinDrawing />,
  unpin: <PinDrawing off />,
  extrude: <Svg30><path d="M5 9L9 5H18V20L14 24H5Z" fill="#eee" stroke="#444" /><path d="M5 9L9 5H18V18L14 21H5Z" fill="#9cc0ea" stroke="#2d4a78" /><path d="M14 9L18 5V18L14 21Z" fill="#4c7ab4" /><path d="M22.500 23V6M20 9L22.500 5.500L25 9" stroke="#333" strokeWidth="1.400" /></Svg30>,
  link: <Svg30><path d="M6 9L10 5H24V20L20 24H6Z" fill="#ddd" stroke="#444" strokeWidth="1.400" /><g transform="translate(7 6.500) scale(0.750)" stroke="#333" strokeWidth="3"><path d="M9 12.500Q7.500 10 10 7.500L14 3.500Q16.500 1.500 19 4Q21 6.500 19 8.500L15.500 12" /><path d="M13 9.500Q14.500 12 12 14.500L8 18.500Q5.500 20.500 3 18Q1 15.500 3 13.500L6.500 10" /></g></Svg30>,
};
const steps = "group group copy move move copy move move copy move pin unpin extrude extrude extrude move move copyRed move move link".split(" ");

const player: [string, string][] = [
  ["Go to start", "M0 0H3V18H0ZM16 1V17L3 9Z"],
  ["Step back", "M12 2V16L0 9ZM13 5H16V13H13Z"],
  ["Play", "M1 0V18L16 9Z"],
  ["Step forward", "M4 2V16L16 9ZM0 5H3V13H0Z"],
  ["Go to end", "M13 0H16V18H13ZM0 1V17L13 9Z"],
];

/* ---------- taskbar icons ---------- */
const Wave = ({ s }: { s: number }) => <svg width={s} height={s} viewBox="0 0 30 30"><rect width="30" height="30" fill="#1d84fb" /><path d="M4 7L7.500 22L11 10L15 17L19 10L22.500 22L26 7L22.500 15L19 7L15 13L11 7L7.500 15Z" fill="#fff" stroke="#fff" strokeLinejoin="round" /></svg>;

const tasks: { name: string; run?: boolean; focus?: boolean; icon: React.ReactNode }[] = [
  { name: "Chrome", run: true, icon: <Svg30><circle cx="15" cy="15" r="14" fill="#fdd04c" /><path d="M2.900 8A14 14 0 0 1 27.100 8H15A7 7 0 0 0 9 18.500Z" fill="#d94f43" /><path d="M2.900 8A14 14 0 0 0 14 29L21 18.500A7 7 0 0 1 9 18.500Z" fill="#1e9e5a" /><circle cx="15" cy="15" r="6.500" fill="#fff" /><circle cx="15" cy="15" r="5.200" fill="#4486f4" /></Svg30> },
  { name: "File Explorer", icon: <Svg30><path d="M1 3H13L15 6H29V26H1Z" fill="#ffe694" /><path d="M1 3H13V6H1Z" fill="#f5c131" /><path d="M6 26V15H24V26H19V20H11V26Z" fill="#37b2ea" /></Svg30> },
  { name: "Word", icon: <Svg30><rect x="14" y="4" width="15" height="22" fill="#fff" /><path d="M17 8H27M17 11.500H27M17 15H27M17 18.500H27M17 22H27" stroke="#2b5797" strokeWidth="1.500" /><path d="M1 4L17 1V29L1 26Z" fill="#2a5599" /><text x="9" y="20" textAnchor="middle" fontFamily="Liberation Sans, sans-serif" fontWeight="700" fontSize="13" fill="#fff">W</text></Svg30> },
  { name: "Media Player", icon: <Svg30><path d="M7 4H27V26L23 28Z" fill="#4f9fc4" /><rect x="3" y="4" width="20" height="24" fill="#8cc9e4" /><circle cx="12.500" cy="16" r="8.500" fill="#f0741e" stroke="#fbd9b8" /><path d="M10 11L18 16L10 21Z" fill="#fff" /></Svg30> },
  { name: "Google Earth Pro", icon: <Svg30><circle cx="15" cy="15" r="14" fill="#a9b2ba" /><path d="M3 9Q14 8 27 23L29 17Q19 5 6 4ZM11 2Q22 4 28 12Q24 1 13 1Z" fill="#eef1f3" /><path d="M1 14Q12 13 22 27L15 29Q4 29 1 14Z" fill="#d5dadf" /><rect x="7" y="21" width="16" height="8" fill="#222" /><text x="15" y="28" textAnchor="middle" fontFamily="Open Sans, sans-serif" fontSize="7.500" fill="#fff">Pro</text></Svg30> },
  { name: "Robot", icon: <Svg30><path d="M4 5L8 1L20 5V12L8 9Z" fill="#000" stroke="#444" /><path d="M5 9L18 12V18L6 16Z" fill="#d31414" /><path d="M9 10V15M14 11V16" stroke="#fff" strokeWidth="1.500" /><path d="M6 16L17 19V28L8 25Z" fill="#14149a" stroke="#333" /><path d="M18 6L21 9V24L17 28V12Z" fill="#050505" stroke="#333" /><path d="M3 5Q-1 16 12 19L24 19" stroke="#e01010" strokeWidth="2" /><path d="M24 15L29 17L24 20L29 24" stroke="#e0d51c" strokeWidth="1.800" /></Svg30> },
  { name: "Circuit", icon: <Svg30><rect x="1" y="1" width="28" height="28" rx="3" fill="#423f86" /><path d="M1 12H29V20H1Z" fill="#2c2a62" /><path d="M3 6H14M3 11H10V8H20M18 4H26M4 17H10V21M14 15V26M18 17V27M22 19V27" stroke="#e4e2f2" strokeWidth="1.800" /><path d="M20 12H27M4 23H11M25 16V20" stroke="#d9c26a" strokeWidth="1.800" /></Svg30> },
  { name: "Brick", icon: <Svg30><path d="M0 10L14 4L30 10L16 17Z" fill="#2b8cc2" /><path d="M0 10L16 17V30L3 21Z" fill="#1b6f9f" /><path d="M16 17L30 10L28 20L16 30Z" fill="#0f547e" /><g fill="#3a9bcd" stroke="#1b6f9f" strokeWidth="0.800"><ellipse cx="8" cy="9" rx="3" ry="2" /><ellipse cx="15" cy="6" rx="3" ry="2" /><ellipse cx="15" cy="12" rx="3" ry="2" /><ellipse cx="22" cy="9" rx="3" ry="2" /></g></Svg30> },
  { name: "Fusion 360", focus: true, icon: <FusionLogo s={30} label /> },
  { name: "Butterfly", icon: <Svg30><rect width="30" height="30" fill="#fff" /><g strokeWidth="2.200" strokeLinejoin="round"><path d="M3 5Q10 5 15 13L5 15Q2 11 3 5Z" stroke="#1a9fd0" /><path d="M14 16Q10 24 4 24L6 15" stroke="#1774b4" /><path d="M16 12L24 4Q26 8 24 13L16 14" stroke="#e0552c" /><path d="M15 16L26 15L27 26Q18 24 15 16Z" stroke="#f29a1f" /></g></Svg30> },
  { name: "Acrobat", icon: <Svg30><rect x="1" y="1" width="28" height="26" fill="#cf1010" /><rect x="1" y="16" width="28" height="11" fill="#8f0606" /><path d="M14 6Q17 13 23 19Q17 16 7 21Q15 17 14 6Z" stroke="#fff" strokeWidth="1.600" /></Svg30> },
  { name: "Malwarebytes", icon: <Svg30><path d="M4 2Q7 9 15 14Q23 9 26 2Q31 12 29 19Q26 26 20 28Q24 22 22 15L15 21L8 15Q6 22 10 28Q4 26 1 19Q-1 12 4 2Z" fill="#1f67b8" /></Svg30> },
  { name: "Spybot", icon: <Svg30><circle cx="15" cy="15" r="14.500" fill="#3d66ae" /><g transform="rotate(20 15 15)"><ellipse cx="15" cy="19" rx="5.500" ry="7" fill="#f2f4f8" /><circle cx="15" cy="9" r="4" fill="#f2f4f8" /><path d="M4 9L11 14M2 17H10M6 25L11 20M26 9L19 14M28 17H20M24 25L19 20" stroke="#f2f4f8" strokeWidth="2" /></g><circle cx="18" cy="9" r="5" stroke="#3fc04a" /></Svg30> },
  { name: "CCleaner", icon: <Svg30><path d="M29 4Q21 0 14 4Q6 9 8 18Q11 28 20 28Q25 28 29 25V18Q23 22 19 20Q15 17 16 13Q18 8 29 11Z" fill="#cf3428" /><path d="M19 2L14 13L17 14Z" fill="#3e8ecb" stroke="#3e8ecb" strokeWidth="2" /><path d="M9 14L18 18L14 29Q3 29 0 23Q7 21 9 14Z" fill="#f3d6a4" /></Svg30> },
  { name: "Caliper", run: true, icon: <Svg30><rect x="1" y="2" width="28" height="27" rx="3" fill="#e6e6e3" /><path d="M2 12L25 2L29 8L22 11V17L16 12L5 20Z" fill="#d8a11c" stroke="#333" /><path d="M4 13L24 4" stroke="#333" strokeWidth="2" /><path d="M2 25V28H10M21 28H28V25" stroke="#222" strokeWidth="1.500" /><text x="20" y="25" textAnchor="middle" fontFamily="Liberation Sans, sans-serif" fontSize="9" fill="#222">46°</text></Svg30> },
  { name: "Downloader", icon: <Svg30><rect width="30" height="30" rx="2" fill="#2d6da3" /><path d="M5 4V27M25 4V27" stroke="#a7cde8" strokeWidth="4" strokeDasharray="3 3" /><path d="M10 5L15 9L20 5M10 13L15 17L20 13M10 21L15 25L20 21" stroke="#fff" strokeWidth="3" /></Svg30> },
  { name: "Castle Link", icon: <Svg30><rect width="30" height="30" fill="#06296b" /><g fontFamily="Liberation Sans, sans-serif" fontWeight="700" fill="#fff" textAnchor="middle"><text x="15" y="12" fontSize="9">castle</text><text x="16" y="22" fontSize="12">Link</text></g><path d="M1 28L7 24H26" stroke="#fff" strokeWidth="2" /></Svg30> },
  { name: "Wave", icon: <Wave s={30} /> },
];

const s20 = { width: 22, height: 22, viewBox: "0 0 22 22", fill: "none", stroke: "#444", strokeWidth: 1.5 } as const;

export default function App() {
  return (
    <Shell>
      <Global />
      <Defs />
      <TitleBar>
        <FusionLogo s={20} />
        <TitleText>Autodesk Fusion 360 (Education License)</TitleText>
        <WindowButton aria-label="Minimize"><svg width="12" height="12" viewBox="0 0 12 12"><path d="M0 5.500H12" stroke="#fff" /></svg></WindowButton>
        <WindowButton aria-label="Restore"><svg width="13" height="13" viewBox="0 0 13 13" fill="none" stroke="#fff"><path d="M0.500 3.500H9.500V12.500H0.500ZM2.500 3V0.500H12.500V10.500H10" /></svg></WindowButton>
        <WindowButton aria-label="Close"><svg width="12" height="12" viewBox="0 0 12 12"><path d="M0 0L12 12M12 0L0 12" stroke="#fff" strokeWidth="1.300" /></svg></WindowButton>
      </TitleBar>

      <TabBar>
        <Tab><TabName><TabCube dim />Shelf V3 v50</TabName><SyncDot $dim /><TabClose aria-label="Close tab"><Cross c="#76818b" /></TabClose></Tab>
        <Tab $active><TabName><TabCube />Shelf V1 vs V2 v3*</TabName><SyncDot /><TabClose aria-label="Close tab"><Cross c="#888" /></TabClose></Tab>
        <AddTab aria-label="New tab"><svg width="14" height="14" viewBox="0 0 14 14"><path d="M7 0V14M0 7H14" stroke="#8a939c" strokeWidth="2.200" /></svg></AddTab>
      </TabBar>

      <QuickBar>
        <QuickGroup $gap={32}>
          <QuickButton aria-label="Data panel"><svg width="21" height="22" viewBox="0 0 23 22" preserveAspectRatio="none" fill="#444"><path d="M0 0H7V6H0ZM8 0H15V6H8ZM16 0H23V6H16ZM0 8H7V14H0ZM8 8H15V14H8ZM16 8H23V14H16ZM0 16H7V22H0ZM8 16H15V22H8ZM16 16H23V22H16Z" /></svg></QuickButton>
          <QuickButton aria-label="File"><svg width="17" height="20" viewBox="0 0 17 20" fill="#444"><path d="M0 0H9V7H17V20H0ZM11 0L17 5.500H11Z" /></svg><Caret /></QuickButton>
          <QuickButton aria-label="Save"><svg width="20" height="20" viewBox="0 0 20 20"><path d="M0 0H18L20 2V20H0Z" fill="#555" /><rect x="3" y="2" width="14" height="8" fill="#f4f4f4" /><rect x="4" y="13" width="11" height="6" fill="#f4f4f4" /><rect x="6" y="15" width="2" height="3" fill="#555" /></svg></QuickButton>
          <QuickGroup $gap={20}>
            <QuickButton aria-label="Undo"><svg width="21" height="16" viewBox="0 0 21 16"><path d="M0 6L8 0V4Q20 4 20 15Q16 9 8 9V13Z" fill="#444" /></svg><Caret /></QuickButton>
            <QuickButton aria-label="Redo"><svg width="21" height="16" viewBox="0 0 21 16"><path d="M21 6L13 0V4Q1 4 1 15Q5 9 13 9V13Z" fill="#999" /></svg><Caret c="#888" /></QuickButton>
          </QuickGroup>
        </QuickGroup>
        <QuickGroup $gap={32}>
          <QuickButton aria-label="Comments"><svg width="21" height="19" viewBox="0 0 21 19"><path d="M0 0H21V14H18V19L13 14H0Z" fill="#4a4a4a" /><path d="M3 4H18M3 7H18M3 10H12" stroke="#eee" strokeWidth="1.300" /></svg></QuickButton>
          <QuickButton aria-label="Job status"><svg width="20" height="20" viewBox="0 0 20 20" fill="none" stroke="#444"><circle cx="10" cy="10" r="8.700" strokeWidth="2.300" /><path d="M10 4.500V10.500H15" strokeWidth="2.200" /></svg></QuickButton>
          <QuickButton $user>Robert Mitsakov<Caret /></QuickButton>
          <QuickButton aria-label="Help"><svg width="20" height="20" viewBox="0 0 20 20"><circle cx="10" cy="10" r="10" fill="#555" /><text x="10" y="15.500" textAnchor="middle" fontFamily="Liberation Sans, sans-serif" fontWeight="700" fontSize="15" fill="#fff">?</text></svg><Caret /></QuickButton>
        </QuickGroup>
      </QuickBar>

      <Canvas>
        <Scene viewBox="0 111 1920 857" preserveAspectRatio="xMidYMid slice" aria-label="Model, top view">
          <Lines />
          <path d="M847.500 0V1080" stroke="#b9b9ff" strokeWidth="2" />
          <LeftModels />
          <Frame />
        </Scene>

        <Ribbon>
          <Grip />
          <Workspace>MODEL<Caret /></Workspace>
          {groups.map((g) => (
            <Group key={g.name} $roomy={g.roomy}>
              <Tools>{g.tools.map((t) => <Tool key={t} $on={t === "select"} aria-label={t}>{icons[t]}</Tool>)}</Tools>
              <GroupLabel>{g.name}<Caret /></GroupLabel>
            </Group>
          ))}
        </Ribbon>

        <Panel>
          <PanelButton aria-label="Collapse"><svg width="14" height="8" viewBox="0 0 14 8" fill="#333"><path d="M6.500 0V8L0 4ZM13.500 0V8L7 4Z" /></svg></PanelButton>
          <PanelTitle>BROWSER</PanelTitle>
          <PanelButton aria-label="Minimize browser"><svg width="12" height="12" viewBox="0 0 12 12"><circle cx="6" cy="6" r="6" fill="#333" /><path d="M2.500 6H9.500" stroke="#fff" strokeWidth="2" /></svg></PanelButton>
          <PanelGrip />
        </Panel>

        <Tree>
          <Row $root>
            <Twisty $root aria-label="Collapse"><svg width="15" height="17" viewBox="0 0 15 17"><path d="M14 3V16H1Z" fill="#888" stroke="#333" strokeWidth="1.500" /></svg></Twisty>
            <Chip>
              <Cell><Bulb /></Cell>
              <Selected><Cell><Assembly /></Cell><RowName>Shelf V1 vs V2 v3</RowName></Selected>
              <ActiveRadio type="radio" defaultChecked aria-label="Activate Shelf V1 vs V2 v3" />
            </Chip>
          </Row>
          {rows.map((r) => (
            <Row key={r.name}>
              <Twisty aria-label={"Expand " + r.name}><Twist /></Twisty>
              <Chip>{r.icons.map((ic, i) => <Cell key={i}>{ic}</Cell>)}<RowName>{r.name}</RowName></Chip>
            </Row>
          ))}
        </Tree>

        <ViewCube>
          <AxisName $axis="Y">Y</AxisName>
          <AxisName $axis="X">X</AxisName>
          <AxisName $axis="Z">Z</AxisName>
          <CubeFace><span>TOP</span></CubeFace>
        </ViewCube>

        <Bottom>
          <Panel $closed>
            <PanelTitle $indent>COMMENTS</PanelTitle>
            <PanelButton aria-label="Show comments"><svg width="12" height="12" viewBox="0 0 12 12"><circle cx="6" cy="6" r="6" fill="#333" /><path d="M2.500 6H9.500M6 2.500V9.500" stroke="#fff" strokeWidth="1.800" /></svg></PanelButton>
            <PanelGrip />
          </Panel>
          <NavBar>
            <NavButton $menu $far aria-label="Orbit"><svg {...s20}><path d="M8 7Q2 8 2 11.500Q2 14 10 14.500Q20 14 20 11Q20 9 16 8M7 14Q8 20 10 20Q14 20 14 11Q14 2 10.500 2Q7 2 7 10" strokeWidth="1.300" /><path d="M7 11.500H13M10 8.500V14.500" stroke="#1a7de0" strokeWidth="2" /><path d="M16 4V8M14 6H18" /></svg><Caret /></NavButton>
            <NavButton aria-label="Look at"><svg {...s20}><path d="M2 8H20V20H2ZM2 8L15 2L12 7M4 8L10 3" /><rect x="6" y="11" width="10" height="6" fill="#aaa" /></svg></NavButton>
            <NavButton aria-label="Pan"><svg {...s20}><path d="M7 21Q5 16 1.500 13Q2 10 5 12L6.500 14L4 5Q5 2.500 6.500 5L9 11L8.500 3Q10 0.500 11 3L12 11L13.500 3.500Q15.500 2 15.500 5L15 12L17.500 7Q19.500 6.500 19 9L17 16L15.500 21Z" fill="#fff" strokeWidth="1.300" /></svg></NavButton>
            <NavButton aria-label="Zoom"><svg {...s20}><circle cx="8" cy="8" r="6" fill="#e3eef0" /><path d="M12 13L17 19" strokeWidth="3" /><path d="M18 2V8M15 5H21M15 11H21" strokeWidth="1.400" /></svg></NavButton>
            <NavButton $wide aria-label="Fit"><svg {...s20}><path d="M1 1H20V20H1Z" strokeDasharray="3 2" strokeWidth="1.200" /><circle cx="10" cy="9" r="8" fill="#dcebea" /><path d="M15 15L20 21" strokeWidth="3" /></svg><Caret /></NavButton>
            <NavButton $menu aria-label="Display settings"><svg {...s20}><path d="M1 2H20V17H1Z" fill="#eee" /><rect x="4" y="4.500" width="13" height="9.500" fill="#8db5e6" stroke="#3a5f94" /><path d="M8 17V20H14V17" /></svg><Caret /></NavButton>
            <NavButton $menu aria-label="Grid and snaps"><svg {...s20} strokeWidth={1}><path d="M1 2H21V20H1ZM1 5H21M1 8H21M1 11H21M1 14H21M1 17H21M4.500 2V20M8 2V20M11.500 2V20M15 2V20M18 2V20" /></svg><Caret /></NavButton>
            <NavButton $menu aria-label="Viewports"><svg {...s20} fill="#9cbfe9" stroke="#3a5a88"><rect x="2" y="3" width="8" height="7" /><rect x="12" y="3" width="8" height="7" /><rect x="2" y="12" width="8" height="7" /><rect x="12" y="12" width="8" height="7" /></svg><Caret /></NavButton>
          </NavBar>
        </Bottom>
      </Canvas>

      <Timeline>
        <Player>
          {player.map(([n, d]) => <PlayButton key={n} aria-label={n}><svg width="16" height="18" viewBox="0 0 16 18"><path d={d} fill="#444" /></svg></PlayButton>)}
        </Player>
        <Steps>
          {steps.map((s, i) => (
            <Step key={i}>
              <StepButton $hl={s === "group"} aria-label={s}>{stepIcons[s]}</StepButton>
              {s === "group" ? <Expand aria-label="Expand group"><svg width="8" height="8" viewBox="0 0 8 8"><path d="M4 0V8M0 4H8" stroke="#111" strokeWidth="2" /></svg></Expand> : <Tick />}
            </Step>
          ))}
        </Steps>
        <Marker width="16" height="40" viewBox="0 0 16 40"><path d="M0 0H16V6L10 11V40H7V11L0 6Z" fill="#555" /></Marker>
        <Settings aria-label="Timeline settings"><Gear s={22} /></Settings>
      </Timeline>

      <Taskbar>
        <Task $system aria-label="Start"><svg width="20" height="20" viewBox="0 0 20 20" fill="#fff"><path d="M0 3L8 1.800V9.500H0ZM9 1.600L20 0V9.500H9ZM0 10.500H8V18.200L0 17ZM9 10.500H20V20L9 18.400Z" /></svg></Task>
        <Task $system aria-label="Search"><svg width="20" height="20" viewBox="0 0 20 20" fill="none" stroke="#fff" strokeWidth="1.500"><circle cx="13" cy="7" r="6.200" /><path d="M8.500 11.500L0.500 19.500" /></svg></Task>
        {tasks.map((t) => <Task key={t.name} aria-label={t.name} $run={t.run} $focus={t.focus}>{t.icon}</Task>)}
        <Tray>
          <TrayButton aria-label="Hidden icons"><svg width="16" height="9" viewBox="0 0 16 9"><path d="M0.500 8.500L8 1L15.500 8.500" fill="none" stroke="#fff" strokeWidth="1.500" /></svg></TrayButton>
          <TrayButton aria-label="Wave"><Wave s={20} /></TrayButton>
          <TrayButton><Temp>46</Temp></TrayButton>
          <TrayButton aria-label="Antivirus"><svg width="20" height="20" viewBox="0 0 20 20"><circle cx="9" cy="11" r="7" fill="#fff" stroke="#f6b91c" strokeWidth="3" /><path d="M5 9L9 14L18 1" fill="none" stroke="#222" strokeWidth="2" /><circle cx="15" cy="14.500" r="5" fill="#1c9b4b" /><path d="M12.500 14.500L14.500 16.500L17.500 13" fill="none" stroke="#fff" strokeWidth="1.500" /></svg></TrayButton>
          <TrayButton aria-label="Battery"><svg width="20" height="14" viewBox="0 0 20 14" fill="none" stroke="#fff"><path d="M1 3H5V5Q5 7 3 7Q1 7 1 5ZM2 0V3M4 0V3M3 7V11H6" /><rect x="6.500" y="2.500" width="11" height="9" fill="#fff" /><path d="M19 5V9" strokeWidth="1.500" /></svg></TrayButton>
          <TrayButton aria-label="Network"><svg width="16" height="16" viewBox="0 0 16 16" fill="none" stroke="#fff"><path d="M0.500 15A14.500 14.500 0 0 1 15 0.500" opacity="0.500" /><path d="M4 15A11 11 0 0 1 15 4.500M7.500 15A7.500 7.500 0 0 1 15 8.500M11 15A4 4 0 0 1 15 12" strokeWidth="1.400" /><circle cx="14" cy="14.500" r="1.300" fill="#fff" /></svg></TrayButton>
          <TrayButton aria-label="Volume"><svg width="21" height="18" viewBox="0 0 21 18" fill="none" stroke="#fff" strokeWidth="1.300"><path d="M1 6H4L8 2V16L4 12H1ZM11 6Q13 9 11 12M14 3.500Q18 9 14 14.500M17 1Q23 9 17 17" /></svg></TrayButton>
          <Clock>19:35<br />16/10/2018</Clock>
          <TrayButton $wide aria-label="Notifications"><svg width="20" height="20" viewBox="0 0 20 20" fill="none" stroke="#fff" strokeWidth="1.500"><path d="M1 1H19V16H13L10 19L7 16H1Z" /></svg></TrayButton>
          <Peek aria-label="Show desktop" />
        </Tray>
      </Taskbar>
    </Shell>
  );
}
